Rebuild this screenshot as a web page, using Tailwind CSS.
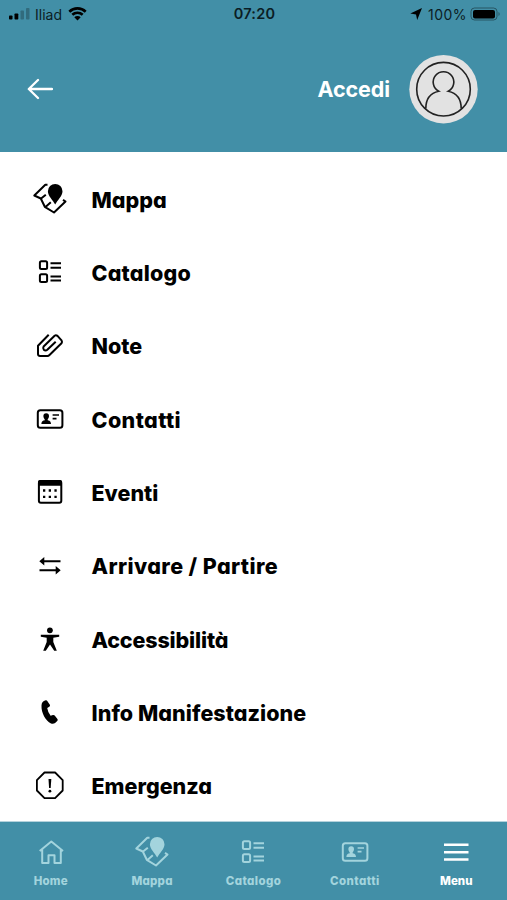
<!DOCTYPE html>
<html lang="it">
<head>
    <meta charset="UTF-8">
    <meta name="viewport" content="width=device-width, initial-scale=1.0">
    <title>Menu</title>
    <script src="https://cdn.jsdelivr.net/npm/@tailwindcss/browser@4"></script>
</head>
<body class="bg-white font-['Inter','Liberation_Sans',sans-serif]">
    <!-- icons shared by the menu and the bottom bar -->
    <svg class="hidden">
        <symbol id="i-mappa" viewBox="0 0 40 40">
            <path d="M17.500 5.800 15.300 5.800 4.300 16.500 10.800 19.500 14.800 27.800 24 33.500 35.500 22.500 33 20.800M10.800 19.800 15.800 15.800M15.500 28 20.800 23.300" fill="none" stroke="currentColor" stroke-width="2" stroke-linejoin="round"/>
            <path d="M25.200 25.500C23 21 17.900 17 17.900 12.200a7.300 7.300 0 0 1 14.600 0C32.500 17 27.400 21 25.200 25.500z" fill="currentColor"/>
        </symbol>
        <symbol id="i-catalogo" viewBox="0 0 40 40">
            <path d="M20.500 11.300H31M20.500 15.700H31M20.500 24.400H31M20.500 28.600H31" stroke="currentColor" stroke-width="2"/>
            <g fill="none" stroke="currentColor" stroke-width="2">
                <rect x="9.900" y="9.300" width="7.200" height="7.600" rx="1.500"/>
                <rect x="9.900" y="22.300" width="7.200" height="7.600" rx="1.500"/>
            </g>
        </symbol>
        <symbol id="i-contatti" viewBox="0 0 40 40">
            <rect x="7.800" y="11.200" width="24.600" height="17.600" rx="2.500" fill="none" stroke="currentColor" stroke-width="2"/>
            <path d="M16.200 14.300c-1.900 0-2.900 1.300-2.800 3 .1 1.400.7 2.300 1.300 3v1c-1.500.4-3.200.8-3.300 3.600h9.600c-.1-2.800-1.800-3.200-3.300-3.600v-1c.6-.7 1.200-1.600 1.300-3 .1-1.700-.9-3-2.800-3z" fill="currentColor"/>
            <path d="M22.600 16H29M22.600 19.700H26.500" stroke="currentColor" stroke-width="1.700"/>
        </symbol>
    </svg>

    <div class="w-[507px] h-[900px] flex flex-col overflow-hidden">
        <header class="h-[152px] bg-[#428fa7] shrink-0">
            <!-- status bar -->
            <div class="h-7 grid grid-cols-3 items-center pl-2 pr-[6px] text-[14px] text-[#0b1d24]">
                <div class="flex items-center">
                    <svg class="w-6 h-4" viewBox="0 0 24 16">
                        <g fill="#000">
                            <rect x="1" y="9.500" width="3.500" height="4" rx=".8"/>
                            <rect x="6.500" y="7.500" width="3.800" height="6" rx=".8"/>
                            <rect x="12.500" y="4.500" width="3.500" height="9" rx=".8" opacity=".25"/>
                            <rect x="18" y="2" width="3.500" height="11.500" rx=".8" opacity=".25"/>
                        </g>
                    </svg>
                    <span class="ml-[3px] w-[28px]">Iliad</span>
                    <svg class="ml-[5px] mb-[2px] w-[19px] h-[15px]" viewBox="0 0 19 15">
                        <path d="M1.300 5.700a11.700 11.700 0 0 1 16.400 0M4.300 8.800a7.500 7.500 0 0 1 10.400 0" fill="none" stroke="#000" stroke-width="2.600"/>
                        <path d="M9.500 14.500 6.300 11.200a4.600 4.600 0 0 1 6.400 0z"/>
                    </svg>
                </div>
                <div class="text-center font-semibold text-[14.500px] tracking-[0.2px]">07:20</div>
                <div class="flex items-center justify-end">
                    <svg class="w-3 h-3" viewBox="0 0 12 12"><path d="M12 0 7.200 12 6 6.500.300 5.500z"/></svg>
                    <span class="ml-[6px] w-[40px] tracking-[0.500px]">100%</span>
                    <svg class="ml-[2px] mb-px w-[31px] h-[14px]" viewBox="0 0 31 14">
                        <rect x="1" y="1" width="26" height="12" rx="3.500" fill="none" stroke="#000" stroke-opacity=".4"/>
                        <rect x="3" y="3" width="22" height="8.500" rx="2"/>
                        <path d="M28.500 5v4a2.300 2.300 0 0 0 0-4z" opacity=".4"/>
                    </svg>
                </div>
            </div>
            <div class="h-[122px] flex items-center justify-between pl-[27px] pr-[29px] text-white">
                <svg class="w-[26px] h-6" viewBox="0 0 26 24">
                    <path d="M25 12H2M11 3 1.800 12 11 21" fill="none" stroke="currentColor" stroke-width="2.300" stroke-linecap="round" stroke-linejoin="round"/>
                </svg>
                <div class="flex items-center">
                    <span class="mr-[19px] pt-px text-[21.500px] font-bold tracking-[-0.100px]">Accedi</span>
                    <svg class="w-[69px] h-[69px]" viewBox="0 0 69 69">
                        <circle cx="34.500" cy="34.200" r="34.200" fill="#e2e2e2"/>
                        <g fill="none" stroke="#222" stroke-width="1.600">
                            <circle cx="34.500" cy="34.200" r="26.800"/>
                            <path d="M16.800 53.500C16.800 43 22.500 37.800 29.700 36.200A10.300 10.300 0 1 1 39.300 36.200C46.500 37.800 52.200 43 52.200 53.500"/>
                        </g>
                    </svg>
                </div>
            </div>
        </header>

        <ul class="h-[669px] shrink-0 overflow-hidden pt-[10.500px] pl-[30px] text-black text-[21.500px] leading-none font-extrabold [font-feature-settings:'cv11']">
            <li class="h-[73.300px] flex items-center gap-[21.500px]">
                <svg class="w-10 h-10"><use href="#i-mappa"/></svg>
                <span class="pt-[3px]">Mappa</span>
            </li>
            <li class="h-[73.300px] flex items-center gap-[21.500px]">
                <svg class="w-10 h-10"><use href="#i-catalogo"/></svg>
                <span class="pt-[3px] tracking-[0.200px]">Catalogo</span>
            </li>
            <li class="h-[73.300px] flex items-center gap-[21.500px]">
                <svg class="w-10 h-10" viewBox="0 0 40 40">
                    <path d="M18.700 8.700 8 19.800V28.200Q8.200 30 10 30H17.500Q18.500 30 19.500 29L31.500 17.300Q32.500 16 31.500 14.300L27.500 9.900Q26 8.700 24.600 9.700L13.600 20.500Q12.600 22.200 13.800 23.700 15.500 25.200 17.300 23.700L25.700 15.700" fill="none" stroke="currentColor" stroke-width="2" stroke-linejoin="round"/>
                </svg>
                <span class="pt-[3px]">Note</span>
            </li>
            <li class="h-[73.300px] flex items-center gap-[21.500px]">
                <svg class="w-10 h-10"><use href="#i-contatti"/></svg>
                <span class="pt-[3px] tracking-[0.400px]">Contatti</span>
            </li>
            <li class="h-[73.300px] flex items-center gap-[21.500px]">
                <svg class="w-10 h-10" viewBox="0 0 40 40">
                    <rect x="8.900" y="8.900" width="22.400" height="21.800" rx="2" fill="none" stroke="currentColor" stroke-width="2"/>
                    <path d="M8 10Q8 8 10 8H30Q32 8 32 10V13.800H8z" fill="currentColor"/>
                    <path d="M13 18.500h2.300M18.700 18.500h2.300M24.400 18.500h2.300M13 24.800h2.300M18.700 24.800h2.300M24.400 24.800h2.300" stroke="currentColor" stroke-width="2.300"/>
                </svg>
                <span class="pt-[3px]">Eventi</span>
            </li>
            <li class="h-[73.300px] flex items-center gap-[21.500px]">
                <svg class="w-10 h-10" viewBox="0 0 40 40">
                    <path d="M13 15.300H30.500M9.500 24.300H27" stroke="currentColor" stroke-width="2"/>
                    <path d="M9.300 15.300 14.300 11V19.600zM30.700 24.300 25.700 20V28.600z" fill="currentColor"/>
                </svg>
                <span class="pt-[3px] tracking-[0.400px]">Arrivare / Partire</span>
            </li>
            <li class="h-[73.300px] flex items-center gap-[21.500px]">
                <svg class="w-10 h-10" viewBox="0 0 40 40">
                    <circle cx="19.900" cy="11.300" r="2.900" fill="currentColor"/>
                    <path d="M10.800 15.800H29.200V17.700L23.300 18.800V23L26.800 31.800H24.200L20 25.500 15.800 31.800H13.200L16.700 23V18.800L10.800 17.700z" fill="currentColor"/>
                </svg>
                <span class="pt-[3px] tracking-[-0.150px]">Accessibilità</span>
            </li>
            <li class="h-[73.300px] flex items-center gap-[21.500px]">
                <svg class="w-10 h-10" viewBox="0 0 40 40">
                    <path d="M15.600 8.200Q16.800 7.900 17.300 8.900L20 13Q20.200 14 19.300 14.700L17.200 16.100Q17.700 20 20.600 23.800L22.900 23.100Q24 22.800 24.700 23.600L27.600 27.300Q28 28.200 27.200 29C25.500 31.100 23.600 32.300 21 31.400 15.500 28.600 11.100 20.600 11.500 13.400 11.600 10.300 13.100 8.900 15.600 8.200z" fill="currentColor"/>
                </svg>
                <span class="pt-[3px] tracking-[0.050px]">Info Manifestazione</span>
            </li>
            <li class="h-[73.300px] flex items-center gap-[21.500px]">
                <svg class="w-10 h-10" viewBox="0 0 40 40">
                    <path d="M14.500 6.500H25.100L32.700 14.100V24.500L25.100 32.100H14.500L6.900 24.500V14.100z" fill="none" stroke="currentColor" stroke-width="1.800" stroke-linejoin="round"/>
                    <path d="M18.500 13H21.300L20.700 22H19.100z" fill="currentColor"/>
                    <circle cx="19.900" cy="25.200" r="1.400" fill="currentColor"/>
                </svg>
                <span class="pt-[3px]">Emergenza</span>
            </li>
        </ul>

        <nav class="h-[79px] shrink-0 grid grid-cols-5 bg-[#428fa7] border-t border-[#b5d2dc] text-[#a3d4dd] text-[11.500px] leading-none font-extrabold [font-feature-settings:'cv11']">
            <a class="flex flex-col items-center pt-[10px]">
                <svg class="w-10 h-10" viewBox="0 0 40 40">
                    <path d="M8.700 19 20.300 9.500 32 19M11.200 17V31H17.500V23.300H23.500V31H29.800V17" fill="none" stroke="currentColor" stroke-width="2" stroke-linejoin="round"/>
                </svg>
                <span class="mt-[4px] tracking-[0.200px]">Home</span>
            </a>
            <a class="flex flex-col items-center pt-[10px]">
                <svg class="w-10 h-10"><use href="#i-mappa"/></svg>
                <span class="mt-[4px] tracking-[0.200px]">Mappa</span>
            </a>
            <a class="flex flex-col items-center pt-[10px]">
                <svg class="w-10 h-10"><use href="#i-catalogo"/></svg>
                <span class="mt-[4px] tracking-[0.400px]">Catalogo</span>
            </a>
            <a class="flex flex-col items-center pt-[10px]">
                <svg class="w-10 h-10"><use href="#i-contatti"/></svg>
                <span class="mt-[4px] tracking-[0.450px]">Contatti</span>
            </a>
            <a class="flex flex-col items-center pt-[10px] text-white">
                <svg class="w-10 h-10" viewBox="0 0 40 40">
                    <path d="M8 12.800H32.500M8 20.300H32.500M8 27.600H32.500" stroke="currentColor" stroke-width="2.500"/>
                </svg>
                <span class="mt-[4px]">Menu</span>
            </a>
        </nav>
    </div>
</body>
</html>
